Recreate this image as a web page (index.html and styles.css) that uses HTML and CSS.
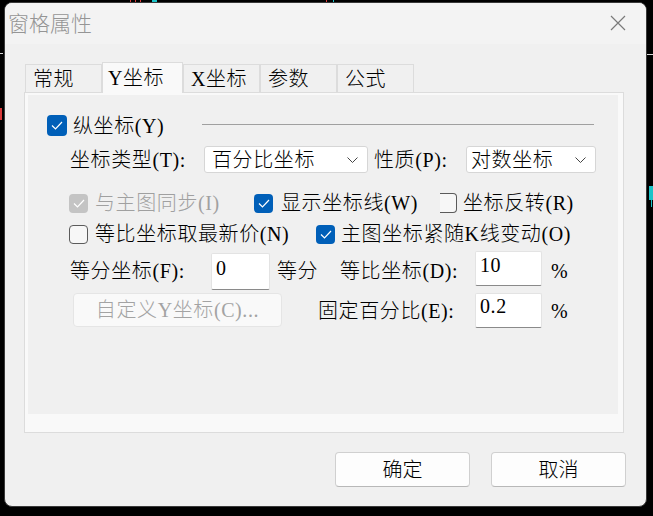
FILE: index.html
```html
<!DOCTYPE html>
<html lang="zh-CN">
<head>
<meta charset="utf-8">
<title>窗格属性</title>
<link rel="stylesheet" href="styles.css">
</head>
<body>
<span class="mk red t1"></span>
<span class="mk red t2"></span>
<span class="mk red t3"></span>
<span class="mk cyan t4"></span>
<span class="mk red t5"></span>
<span class="mk cyan t6"></span>
<span class="mk white l1"></span>
<span class="mk red l2"></span>
<span class="mk white r1m"></span>
<span class="mk cyan r2m"></span>
<span class="mk cyan r3m"></span>

<div class="dialog">
  <div class="titlebar">
    <span class="title">窗格属性</span>
    <svg class="close" viewBox="0 0 16 16" width="16" height="16"><path d="M1 1 L15 15 M15 1 L1 15" stroke="#7a7a7a" stroke-width="1.2" fill="none"/></svg>
  </div>
  <div class="main">
    <div class="tabs">
      <div class="tab">常规</div>
      <div class="tab active">Y坐标</div>
      <div class="tab">X坐标</div>
      <div class="tab">参数</div>
      <div class="tab">公式</div>
    </div>
    <div class="panel">
      <div class="inner">
        <div class="row r1">
          <span class="cb on big"><svg viewBox="0 0 12 9"><path d="M1 4.5 L4.5 8 L11 1" stroke="#fff" stroke-width="1.2" fill="none"/></svg></span>
          <span class="l-y">纵坐标(Y)</span>
          <span class="sep"></span>
        </div>
        <div class="row r2">
          <span class="l-t">坐标类型(T):</span>
          <div class="select s1"><span>百分比坐标</span><svg viewBox="0 0 11 6" width="11" height="6"><path d="M0.5 0.5 L5.5 5.5 L10.5 0.5" stroke="#444" stroke-width="1" fill="none"/></svg></div>
          <span class="l-p">性质(P):</span>
          <div class="select s2"><span>对数坐标</span><svg viewBox="0 0 11 6" width="11" height="6"><path d="M0.5 0.5 L5.5 5.5 L10.5 0.5" stroke="#444" stroke-width="1" fill="none"/></svg></div>
        </div>
        <div class="row r3">
          <span class="cb dis"><svg viewBox="0 0 12 9"><path d="M1 4.5 L4.5 8 L11 1" stroke="#fff" stroke-width="1.2" fill="none"/></svg></span>
          <span class="l-sync">与主图同步(I)</span>
          <span class="cb on"><svg viewBox="0 0 12 9"><path d="M1 4.5 L4.5 8 L11 1" stroke="#fff" stroke-width="1.2" fill="none"/></svg></span>
          <span class="l-line">显示坐标线(W)</span>
          <span class="cb part"></span>
          <span class="l-rev">坐标反转(R)</span>
        </div>
        <div class="row r4">
          <span class="cb off"></span>
          <span class="l-new">等比坐标取最新价(N)</span>
          <span class="cb on"><svg viewBox="0 0 12 9"><path d="M1 4.5 L4.5 8 L11 1" stroke="#fff" stroke-width="1.2" fill="none"/></svg></span>
          <span class="l-k">主图坐标紧随K线变动(O)</span>
        </div>
        <div class="row r5">
          <span class="l-f">等分坐标(F):</span>
          <div class="input in1">0</div>
          <span class="l-deng">等分</span>
          <span class="l-d">等比坐标(D):</span>
          <div class="input in2">10</div>
          <span class="pct">%</span>
        </div>
        <div class="row r6">
          <div class="btn-dis">自定义Y坐标(C)...</div>
          <span class="l-e">固定百分比(E):</span>
          <div class="input in3">0.2</div>
          <span class="pct">%</span>
        </div>
      </div>
    </div>
    <div class="footer">
      <button class="btn">确定</button>
      <button class="btn">取消</button>
    </div>
  </div>
</div>
</body>
</html>
```

FILE: styles.css
```css
* { box-sizing: border-box; }
html, body { margin: 0; padding: 0; }
body {
  width: 653px;
  height: 516px;
  background: #000;
  overflow: hidden;
  position: relative;
  font-family: "Liberation Serif", "Noto Sans CJK SC", serif;
  font-size: 20px;
  font-weight: 300;
  color: #000;
}

/* chart fragments peeking behind the dialog */
.mk { position: absolute; display: block; }
.red { background: #d83a3a; }
.cyan { background: #19c3c8; }
.white { background: #d8d8d8; }
.t1 { left: 130px; top: 0; width: 1px; height: 2px; }
.t2 { left: 135px; top: 0; width: 1px; height: 2px; }
.t3 { left: 140px; top: 0; width: 1px; height: 2px; }
.t4 { left: 152px; top: 0; width: 5px; height: 3px; }
.t5 { left: 326px; top: 0; width: 1px; height: 3px; }
.t6 { left: 333px; top: 0; width: 1px; height: 3px; }
.l1 { left: 0; top: 53px; width: 3px; height: 1px; }
.l2 { left: 0; top: 108px; width: 2px; height: 12px; }
.r1m { left: 647px; top: 54px; width: 6px; height: 1px; }
.r2m { left: 649px; top: 186px; width: 4px; height: 14px; }
.r3m { left: 651px; top: 200px; width: 1px; height: 7px; }

.dialog {
  margin: 2px 0 0 4px;
  width: 643px;
  height: 505px;
  border: 1px solid #3a3a3a;
  border-radius: 8px;
  background: #f0f0f0;
  overflow: hidden;
  display: flex;
  flex-direction: column;
  position: relative;
}

.titlebar {
  height: 41px;
  flex: none;
  background: #f3f3f3;
  display: flex;
  align-items: center;
  justify-content: space-between;
  padding: 0 20px 0 3px;
}
.title {
  font-family: "Noto Sans CJK SC", sans-serif;
  font-size: 21px;
  line-height: 21px;
  color: #959595;
  margin-top: -2px;
}
.close { display: block; margin-top: -2px; }

.main {
  flex: 1;
  padding: 18px 0 0 19px;
}

.tabs {
  display: flex;
  align-items: flex-end;
  height: 30px;
  margin-left: 1px;
  position: relative;
  z-index: 1;
}
.tab {
  width: 77px;
  height: 28px;
  border: 1px solid #dcdcdc;
  border-bottom: none;
  background: #f0f0f0;
  padding-left: 7px;
  display: flex;
  align-items: center;
  line-height: 20px;
  white-space: nowrap;
  letter-spacing: 0.5px;
}
.tab.active {
  width: 81px;
  height: 31px;
  margin-bottom: -1px;
  background: #f9f9f9;
  padding-left: 5px;
  padding-bottom: 1px;
}

.panel {
  width: 600px;
  height: 341px;
  border: 1px solid #dcdcdc;
  background: #f9f9f9;
  padding: 2px 5px 18px 3px;
}
.inner {
  height: 100%;
  background: #f0f0f0;
  padding: 20px 0 0 19px;
}

.row {
  display: flex;
  align-items: center;
  line-height: 20px;
  white-space: nowrap;
  letter-spacing: 0.6px;
}

.cb {
  width: 19px;
  height: 19px;
  flex: none;
  border-radius: 4px;
  display: flex;
  align-items: center;
  justify-content: center;
}
.cb svg { width: 12px; height: 9px; display: block; }
.cb.on { background: #005fb8; }
.cb.dis { background: #c4c4c4; }
.cb.off { border: 1px solid #5b5b5b; background: #f7f7f7; }
.cb.part {
  width: 17px;
  height: 20px;
  border: 1px solid #5b5b5b;
  border-left: none;
  border-radius: 0 4px 4px 0;
  background: #f7f7f7;
}
.cb.big { width: 20px; height: 21px; }

.r1 { height: 21px; width: 547px; }
.l-y { margin-left: 6px; }
.sep {
  margin-left: auto;
  width: 392px;
  height: 1px;
  background: #a0a0a0;
  margin-top: -2px;
}

.r2 { margin-top: 10px; margin-left: 23px; height: 27px; }
.l-t { width: 134px; }
.select {
  height: 27px;
  background: #fff;
  border: 1px solid #d6d6d6;
  border-radius: 3px;
  display: flex;
  align-items: center;
  justify-content: space-between;
  padding: 0 9px 0 7px;
}
.s1 { width: 164px; }
.s2 { width: 130px; padding-left: 4px; }
.select svg { display: block; }
.l-p { margin-left: 6px; width: 92px; }

.r3 { margin-top: 20px; margin-left: 22px; height: 20px; }
.l-sync { margin-left: 7px; width: 159px; color: #a0a0a0; }
.l-line { margin-left: 8px; width: 159px; }
.l-rev { margin-left: 6px; }

.r4 { margin-top: 11px; margin-left: 22px; height: 20px; }
.l-new { margin-left: 7px; width: 221px; }
.l-k { margin-left: 6px; }

.r5 { margin-top: 7px; margin-left: 23px; height: 39px; }
.l-f { width: 141px; }
.input {
  background: #fff;
  border: 1px solid #e3e3e3;
  border-bottom-color: #8a8a8a;
  border-radius: 2px;
  padding: 3px 0 0 4px;
  line-height: 20px;
}
.in1 { width: 59px; height: 37px; align-self: flex-end; padding-top: 4px; }
.l-deng { margin-left: 7px; width: 63px; }
.l-d { width: 135px; }
.in2 { width: 67px; height: 35px; align-self: flex-start; }
.pct { margin-left: 9px; }

.r6 { margin-top: 3px; margin-left: 26px; height: 35px; }
.btn-dis {
  width: 209px;
  height: 34px;
  align-self: flex-start;
  border: 1px solid #e5e5e5;
  border-radius: 4px;
  background: #f9f9f9;
  color: #a3a3a3;
  display: flex;
  align-items: center;
  justify-content: center;
}
.l-e { margin-left: 36px; width: 157px; }
.in3 { width: 67px; height: 35px; padding-top: 2px; }

.footer {
  display: flex;
  justify-content: flex-end;
  gap: 21px;
  padding-right: 20px;
  margin-top: 19px;
}
.btn {
  width: 135px;
  height: 35px;
  border: 1px solid #d0d0d0;
  border-bottom-color: #b8b8b8;
  border-radius: 4px;
  background: #fdfdfd;
  font: inherit;
  color: #000;
  line-height: 20px;
  padding: 0;
}
```
